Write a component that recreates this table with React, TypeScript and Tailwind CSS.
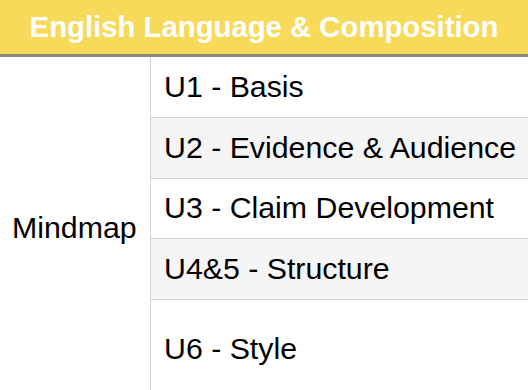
const units = [
  { label: "U1 - Basis", shaded: false, height: "h-[61px]" },
  { label: "U2 - Evidence & Audience", shaded: true, height: "h-[61px]" },
  { label: "U3 - Claim Development", shaded: false, height: "h-[60px]" },
  { label: "U4&5 - Structure", shaded: true, height: "h-[61px]" },
  { label: "U6 - Style", shaded: false, height: "h-[100px]" },
]

export default function App() {
  return (
    <div className="w-[528px] h-[390px] overflow-hidden bg-white font-['Liberation_Sans',Arial,sans-serif] text-black">
      <div className="h-[54px] bg-[#f8da5b] flex items-center justify-center">
        <h1 className="text-[29.3px] font-bold text-white leading-none">English Language &amp; Composition</h1>
      </div>
      <div className="h-[3px] bg-[#8b8682]" />

      <div className="flex">
        <div className="w-[151px] shrink-0 border-r border-[#cfcfcf] flex items-center pl-[12px]">
          <span className="text-[30.3px] leading-none">Mindmap</span>
        </div>
        <div className="flex-1 flex flex-col">
          {units.map((u) => (
            <div
              key={u.label}
              className={`${u.height} border-b border-[#d4d4d4] flex items-center pl-[13px] ${u.shaded ? "bg-[#f5f5f5]" : "bg-white"}`}
            >
              <span className="text-[30.3px] leading-none whitespace-nowrap">{u.label}</span>
            </div>
          ))}
        </div>
      </div>
    </div>
  )
}
